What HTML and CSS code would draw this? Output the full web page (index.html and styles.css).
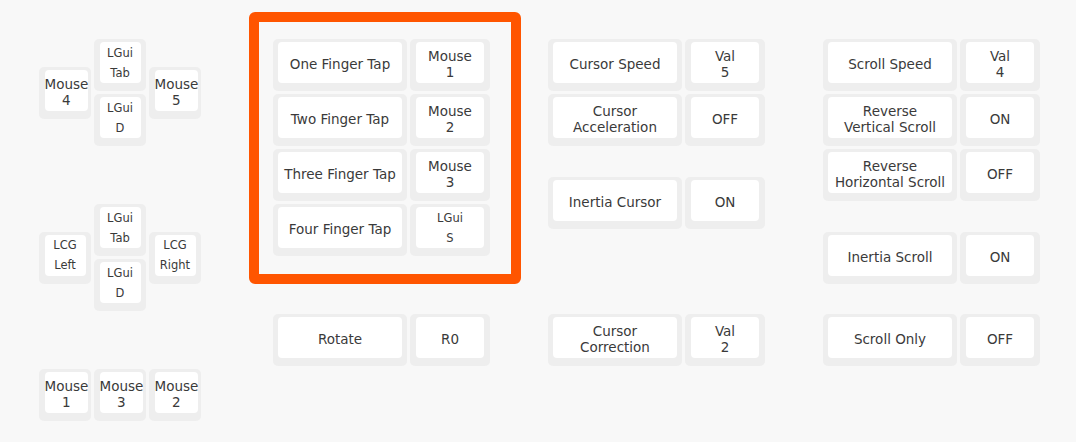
FILE: index.html
```html
<!DOCTYPE html>
<html>
<head>
<meta charset="utf-8">
<link rel="stylesheet" href="styles.css">
</head>
<body>
<div class="board">
  <div class="key c0 r1 w1"><div class="cap">Mouse<br>4</div></div>
  <div class="key c4 r0 w1"><div class="cap small">LGui<br>Tab</div></div>
  <div class="key c8 r1 w1"><div class="cap">Mouse<br>5</div></div>
  <div class="key c4 r2 w1"><div class="cap small">LGui<br>D</div></div>

  <div class="key c0 r7 w1"><div class="cap small">LCG<br>Left</div></div>
  <div class="key c4 r6 w1"><div class="cap small">LGui<br>Tab</div></div>
  <div class="key c8 r7 w1"><div class="cap small">LCG<br>Right</div></div>
  <div class="key c4 r8 w1"><div class="cap small">LGui<br>D</div></div>

  <div class="key c0 r12 w1"><div class="cap">Mouse<br>1</div></div>
  <div class="key c4 r12 w1"><div class="cap">Mouse<br>3</div></div>
  <div class="key c8 r12 w1"><div class="cap">Mouse<br>2</div></div>

  <div class="key c17 r0 w25"><div class="cap">One Finger Tap</div></div>
  <div class="key c27 r0 w15"><div class="cap">Mouse<br>1</div></div>
  <div class="key c17 r2 w25"><div class="cap">Two Finger Tap</div></div>
  <div class="key c27 r2 w15"><div class="cap">Mouse<br>2</div></div>
  <div class="key c17 r4 w25"><div class="cap">Three Finger Tap</div></div>
  <div class="key c27 r4 w15"><div class="cap">Mouse<br>3</div></div>
  <div class="key c17 r6 w25"><div class="cap">Four Finger Tap</div></div>
  <div class="key c27 r6 w15"><div class="cap small">LGui<br>S</div></div>

  <div class="key c17 r10 w25"><div class="cap">Rotate</div></div>
  <div class="key c27 r10 w15"><div class="cap">R0</div></div>

  <div class="key c37 r0 w25"><div class="cap">Cursor Speed</div></div>
  <div class="key c47 r0 w15"><div class="cap">Val<br>5</div></div>
  <div class="key c37 r2 w25"><div class="cap">Cursor<br>Acceleration</div></div>
  <div class="key c47 r2 w15"><div class="cap">OFF</div></div>
  <div class="key c37 r5 w25"><div class="cap">Inertia Cursor</div></div>
  <div class="key c47 r5 w15"><div class="cap">ON</div></div>
  <div class="key c37 r10 w25"><div class="cap">Cursor<br>Correction</div></div>
  <div class="key c47 r10 w15"><div class="cap">Val<br>2</div></div>

  <div class="key c57 r0 w25"><div class="cap">Scroll Speed</div></div>
  <div class="key c67 r0 w15"><div class="cap">Val<br>4</div></div>
  <div class="key c57 r2 w25"><div class="cap">Reverse<br>Vertical Scroll</div></div>
  <div class="key c67 r2 w15"><div class="cap">ON</div></div>
  <div class="key c57 r4 w25"><div class="cap">Reverse<br>Horizontal Scroll</div></div>
  <div class="key c67 r4 w15"><div class="cap">OFF</div></div>
  <div class="key c57 r7 w25"><div class="cap">Inertia Scroll</div></div>
  <div class="key c67 r7 w15"><div class="cap">ON</div></div>
  <div class="key c57 r10 w25"><div class="cap">Scroll Only</div></div>
  <div class="key c67 r10 w15"><div class="cap">OFF</div></div>

  <div class="highlight"></div>
</div>
</body>
</html>
```

FILE: styles.css
```css
html, body {
  margin: 0;
  padding: 0;
  background: #f8f8f8;
}
body {
  width: 1076px;
  height: 442px;
  overflow: hidden;
  font-family: "DejaVu Sans", sans-serif;
  color: #3a3a3a;
}
.board {
  position: relative;
  display: grid;
  grid-template-columns: repeat(73, 13.75px);
  grid-template-rows: repeat(14, 27.5px);
  padding: 37.5px 0 0 37.5px;
}
.key {
  margin: 1.5px;
  background: #eeeeee;
  border-radius: 5px;
  padding: 3px 5.5px 8px;
  display: flex;
  grid-row-end: span 2;
}
.cap {
  flex: 1;
  background: #ffffff;
  border-radius: 4px;
  display: flex;
  align-items: center;
  justify-content: center;
  text-align: center;
  font-size: 13.5px;
  line-height: 16px;
  padding-top: 3px;
  white-space: nowrap;
}
.cap.small {
  font-size: 11.5px;
  line-height: 20px;
  padding-top: 0;
}
.w1 { grid-column-end: span 4; }
.w15 { grid-column-end: span 6; }
.w25 { grid-column-end: span 10; }
.c0 { grid-column-start: 1; }
.c4 { grid-column-start: 5; }
.c8 { grid-column-start: 9; }
.c17 { grid-column-start: 18; }
.c27 { grid-column-start: 28; }
.c37 { grid-column-start: 38; }
.c47 { grid-column-start: 48; }
.c57 { grid-column-start: 58; }
.c67 { grid-column-start: 68; }
.r0 { grid-row-start: 1; }
.r1 { grid-row-start: 2; }
.r2 { grid-row-start: 3; }
.r4 { grid-row-start: 5; }
.r5 { grid-row-start: 6; }
.r6 { grid-row-start: 7; }
.r7 { grid-row-start: 8; }
.r8 { grid-row-start: 9; }
.r10 { grid-row-start: 11; }
.r12 { grid-row-start: 13; }
.highlight {
  position: absolute;
  left: 249px;
  top: 11.5px;
  width: 272px;
  height: 272px;
  box-sizing: border-box;
  border: 10.5px solid #ff5500;
  border-radius: 6px;
  pointer-events: none;
}
```
